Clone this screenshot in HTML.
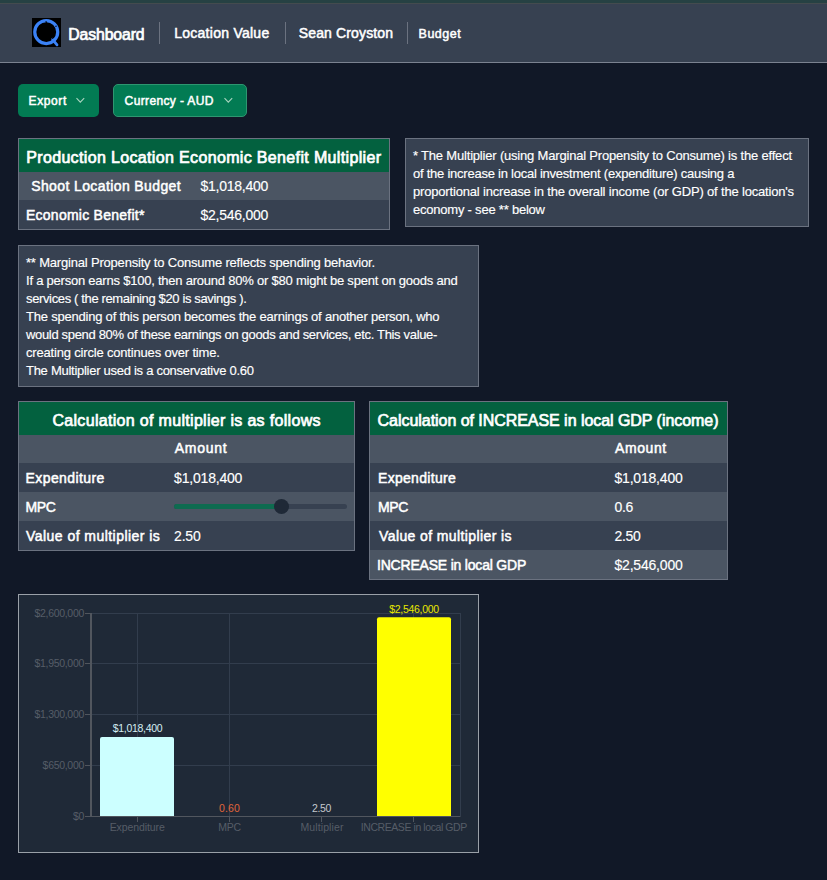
<!DOCTYPE html>
<html>
<head>
<meta charset="utf-8">
<style>
html,body{margin:0;padding:0;}
body{width:827px;height:880px;overflow:hidden;background:#111827;font-family:"Liberation Sans",sans-serif;color:#fff;position:relative;}
.abs{position:absolute;}
.topstrip{left:0;top:0;width:827px;height:3px;background:#264143;}
.topline{left:0;top:3px;width:827px;height:1px;background:#444b4e;}
.nav{left:0;top:4px;width:827px;height:58px;background:#374151;}
.navline{left:0;top:62px;width:827px;height:1px;background:#7b8290;}
.logo{left:32px;top:18px;width:29px;height:29px;background:#000;}
.sep{width:1px;background:#6b7280;top:22px;height:22px;}
.navt{font-weight:bold;white-space:nowrap;line-height:1;}
.btn{background:#027b53;border-radius:5px;}
.chev{position:absolute;}
.tbl{border:1px solid #6b7280;box-sizing:border-box;overflow:hidden;}
.row{position:absolute;left:0;right:0;}
.hd{background:#03613f;}
.r1{background:#4b5563;}
.r2{background:#374151;}
.t{position:absolute;white-space:nowrap;line-height:1;}
.b{font-weight:bold;}
.sb{position:absolute;white-space:nowrap;line-height:1;font-weight:normal;-webkit-text-stroke:0.5px #fff;}
#t1h,#t2h,#t3h{-webkit-text-stroke:0.7px #fff;}
#nav_dash{-webkit-text-stroke:0.7px #fff;}
.rg{-webkit-text-stroke:0.15px #fff;}
.note{background:#374151;border:1px solid #6b7280;box-sizing:border-box;}
.para{position:absolute;white-space:nowrap;font-size:13px;line-height:18px;letter-spacing:-0.25px;-webkit-text-stroke:0.15px #fff;}
</style>
</head>
<body>
<div class="abs topstrip"></div>
<div class="abs topline"></div>
<div class="abs nav"></div>
<div class="abs navline"></div>
<div class="abs logo">
<svg width="29" height="29" viewBox="0 0 29 29"><circle cx="14.25" cy="14.05" r="11.5" fill="none" stroke="#3b82f6" stroke-width="3.2"/><path d="M20.5 21.3 L25 26.8" stroke="#3b82f6" stroke-width="2.8" stroke-linecap="round"/><path d="M13.6 3.6 L15 4.4" stroke="#000" stroke-width="1.1"/><path d="M23.4 8.6 L24.6 8.0" stroke="#000" stroke-width="1.1"/><path d="M19.6 21.2 L21 20" stroke="#000" stroke-width="0.9"/></svg>
</div>
<div class="sb" id="nav_dash" style="left:68.2px;top:27px;font-size:15.8px;letter-spacing:-0.101px;">Dashboard</div>
<div class="abs sep" style="left:159px;"></div>
<div class="sb" id="nav_loc" style="left:174.2px;top:26px;font-size:14.0px;letter-spacing:0.264px;">Location Value</div>
<div class="abs sep" style="left:285px;"></div>
<div class="sb" id="nav_sean" style="left:298.8px;top:26px;font-size:14.0px;letter-spacing:0.135px;">Sean Croyston</div>
<div class="abs sep" style="left:407px;"></div>
<div class="sb" id="nav_budget" style="left:418.6px;top:28px;font-size:12.5px;letter-spacing:0.480px;">Budget</div>

<!-- buttons -->
<div class="abs btn" style="left:18px;top:84px;width:81px;height:33px;"></div>
<div class="sb" id="btn_export" style="left:28.6px;top:95px;font-size:12.0px;letter-spacing:0.600px;">Export</div>
<svg class="abs" style="left:76px;top:97px" width="10" height="7"><path d="M0.5 1.2 L4.3 5.2 L8.2 1.2" fill="none" stroke="#a9d4bf" stroke-width="1.1"/></svg>
<div class="abs btn" style="left:113px;top:84px;width:134px;height:33px;box-sizing:border-box;border:1px solid #2e9670;"></div>
<div class="sb" id="btn_cur" style="left:124.6px;top:95px;font-size:12.0px;letter-spacing:0.371px;">Currency - AUD</div>
<svg class="abs" style="left:224px;top:97px" width="10" height="7"><path d="M0.5 1.2 L4.3 5.2 L8.2 1.2" fill="none" stroke="#a9d4bf" stroke-width="1.1"/></svg>

<!-- table 1 -->
<div class="abs tbl" style="left:18px;top:138px;width:372px;height:92px;">
  <div class="row hd" style="top:0;height:33px;"></div>
  <div class="row r1" style="top:33px;height:28px;"></div>
  <div class="row r2" style="top:61px;height:29px;"></div>
</div>
<div class="sb" id="t1h" style="left:26.2px;top:150px;font-size:16.0px;letter-spacing:0.348px;">Production Location Economic Benefit Multiplier</div>
<div class="sb" id="t1r1a" style="left:31.2px;top:179px;font-size:14.0px;letter-spacing:0.390px;">Shoot Location Budget</div>
<div class="sb rg" id="t1v1" style="left:200.5px;top:179px;font-size:14.0px;letter-spacing:-0.25px;">$1,018,400</div>
<div class="sb" id="t1r2a" style="left:26.0px;top:208px;font-size:14.0px;letter-spacing:0.250px;">Economic Benefit*</div>
<div class="sb rg" id="t1v2" style="left:200.5px;top:208px;font-size:14.0px;letter-spacing:-0.25px;">$2,546,000</div>

<!-- note 1 -->
<div class="abs note" style="left:405px;top:138px;width:404px;height:89px;"></div>
<div class="para" id="pa0" style="left:413px;top:147px;letter-spacing:-0.188px;">* The Multiplier (using Marginal Propensity to Consume) is the effect</div>
<div class="para" id="pa1" style="left:413px;top:165px;letter-spacing:-0.240px;">of the increase in local investment (expenditure) causing a</div>
<div class="para" id="pa2" style="left:413px;top:183px;letter-spacing:-0.178px;">proportional increase in the overall income (or GDP) of the location's</div>
<div class="para" id="pa3" style="left:413px;top:201px;letter-spacing:-0.218px;">economy - see ** below</div>


<!-- note 2 -->
<div class="abs note" style="left:18px;top:245px;width:461px;height:142px;"></div>
<div class="para" id="pb0" style="left:26px;top:254px;letter-spacing:-0.191px;">** Marginal Propensity to Consume reflects spending behavior.</div>
<div class="para" id="pb1" style="left:26px;top:272px;letter-spacing:-0.224px;">If a person earns $100, then around 80% or $80 might be spent on goods and</div>
<div class="para" id="pb2" style="left:26px;top:290px;letter-spacing:-0.361px;">services ( the remaining $20 is savings ).</div>
<div class="para" id="pb3" style="left:26px;top:308px;letter-spacing:-0.214px;">The spending of this person becomes the earnings of another person, who</div>
<div class="para" id="pb4" style="left:26px;top:326px;letter-spacing:-0.326px;">would spend 80% of these earnings on goods and services, etc. This value-</div>
<div class="para" id="pb5" style="left:26px;top:344px;letter-spacing:-0.180px;">creating circle continues over time.</div>
<div class="para" id="pb6" style="left:26px;top:362px;letter-spacing:-0.274px;">The Multiplier used is a conservative 0.60</div>


<!-- table 2 -->
<div class="abs tbl" style="left:18px;top:401px;width:337px;height:150px;">
  <div class="row hd" style="top:0;height:33px;"></div>
  <div class="row r1" style="top:33px;height:28px;"></div>
  <div class="row r2" style="top:61px;height:29px;"></div>
  <div class="row r1" style="top:90px;height:29px;"></div>
  <div class="row r2" style="top:119px;height:29px;"></div>
</div>

<!-- table 3 -->
<div class="abs tbl" style="left:369px;top:401px;width:359px;height:179px;">
  <div class="row hd" style="top:0;height:33px;"></div>
  <div class="row r1" style="top:33px;height:28px;"></div>
  <div class="row r2" style="top:61px;height:29px;"></div>
  <div class="row r1" style="top:90px;height:29px;"></div>
  <div class="row r2" style="top:119px;height:29px;"></div>
  <div class="row r1" style="top:148px;height:29px;"></div>
</div>

<!-- table 2 text -->
<div class="sb" id="t2h" style="left:52.4px;top:413px;font-size:16.0px;letter-spacing:0.316px;">Calculation of multiplier is as follows</div>
<div class="sb" id="t2amt" style="left:174.8px;top:441px;font-size:14.0px;letter-spacing:0.720px;">Amount</div>
<div class="sb" id="t2exp" style="left:25.6px;top:471px;font-size:14.0px;letter-spacing:0.400px;">Expenditure</div>
<div class="sb rg" id="t2v1" style="left:174.1px;top:471px;font-size:14.0px;letter-spacing:-0.2px;">$1,018,400</div>
<div class="sb" id="t2mpc" style="left:25.6px;top:500px;font-size:14.0px;letter-spacing:-0.400px;">MPC</div>
<div class="abs" style="left:174px;top:504px;width:173px;height:5px;border-radius:3px;background:#374151;"></div>
<div class="abs" style="left:174px;top:504px;width:108px;height:5px;border-radius:3px 0 0 3px;background:#0e6b50;"></div>
<div class="abs" style="left:273.8px;top:499px;width:15px;height:15px;border-radius:50%;background:#1f2937;"></div>
<div class="sb" id="t2val" style="left:26.0px;top:529px;font-size:14.0px;letter-spacing:0.458px;">Value of multiplier is</div>
<div class="sb rg" id="t2v4" style="left:174.1px;top:529px;font-size:14.0px;letter-spacing:-0.2px;">2.50</div>

<!-- table 3 text -->
<div class="sb" id="t3h" style="left:377.6px;top:413px;font-size:16.0px;letter-spacing:-0.046px;">Calculation of INCREASE in local GDP (income)</div>
<div class="sb" id="t3amt" style="left:615.0px;top:441px;font-size:14.0px;letter-spacing:0.600px;">Amount</div>
<div class="sb" id="t3exp" style="left:378.0px;top:471px;font-size:14.0px;letter-spacing:0.300px;">Expenditure</div>
<div class="sb rg" id="t3v1" style="left:614.5px;top:471px;font-size:14.0px;letter-spacing:-0.2px;">$1,018,400</div>
<div class="sb" id="t3mpc" style="left:378.0px;top:500px;font-size:14.0px;letter-spacing:-0.400px;">MPC</div>
<div class="sb rg" id="t3v2" style="left:614.5px;top:500px;font-size:14.0px;letter-spacing:-0.4px;">0.6</div>
<div class="sb" id="t3val" style="left:379.0px;top:529px;font-size:14.0px;letter-spacing:0.398px;">Value of multiplier is</div>
<div class="sb rg" id="t3v3" style="left:614.5px;top:529px;font-size:14.0px;letter-spacing:-0.3px;">2.50</div>
<div class="sb" id="t3inc" style="left:377.0px;top:558px;font-size:14.0px;letter-spacing:-0.200px;">INCREASE in local GDP</div>
<div class="sb rg" id="t3v4" style="left:614.5px;top:558px;font-size:14.0px;letter-spacing:-0.2px;">$2,546,000</div>

<!-- chart -->
<div class="abs" style="left:18px;top:594px;width:461px;height:259px;box-sizing:border-box;border:1px solid #9aa0a8;background:#1f2937;"></div>

<svg class="abs" style="left:18px;top:594px;" width="461" height="259" viewBox="18 594 461 259" font-family="Liberation Sans, sans-serif">
  <g stroke="#323d4d" stroke-width="1" fill="none">
    <path d="M92 613.5 H460.5 M92 663.5 H460.5 M92 714.5 H460.5 M92 765.5 H460.5"/>
    <path d="M137.5 613 V816 M229.5 613 V816 M413.5 613 V816 M460.5 613 V816"/>
  </g>
  <path d="M100 816.5 V739 Q100 737 102 737 H172 Q174 737 174 739 V816.5 Z" fill="#ccffff"/>
  <path d="M377 816.5 V619.2 Q377 617.2 379 617.2 H449 Q451 617.2 451 619.2 V816.5 Z" fill="#ffff00"/>
  <g stroke="#51565e" fill="none">
    <path d="M91 613 V817" stroke-width="2"/>
    <path d="M90 816.5 H460.5" stroke-width="1"/>
    <path d="M85 613.5 H90 M85 663.5 H90 M85 714.5 H90 M85 765.5 H90 M85 816.5 H90" stroke-width="1"/>
    <path d="M137.5 817 V822 M229.5 817 V822 M321.5 817 V822 M413.5 817 V822" stroke-width="1"/>
  </g>
  <g fill="#565d67" font-size="10.5" text-anchor="end" letter-spacing="-0.3">
    <text x="84" y="617">$2,600,000</text>
    <text x="84" y="667">$1,950,000</text>
    <text x="84" y="718">$1,300,000</text>
    <text x="84" y="769">$650,000</text>
    <text x="84" y="820">$0</text>
  </g>
  <g fill="#565d67" font-size="10.5" text-anchor="middle" letter-spacing="-0.3">
    <text x="137.2" y="830.5" letter-spacing="-0.1">Expenditure</text>
    <text x="229.5" y="830.5">MPC</text>
    <text x="322" y="830.5" letter-spacing="0.1">Multiplier</text>
    <text x="413.8" y="830.5" letter-spacing="-0.42">INCREASE in local GDP</text>
  </g>
  <g font-size="10.5" text-anchor="middle" letter-spacing="-0.3">
    <text x="137.5" y="731.5" fill="#d5eef3">$1,018,400</text>
    <text x="229.5" y="812" fill="#e0653a" letter-spacing="0.1">0.60</text>
    <text x="321.5" y="812" fill="#c4c8ce">2.50</text>
    <text x="414" y="613" fill="#e8e800">$2,546,000</text>
  </g>
</svg>
</body>
</html>
